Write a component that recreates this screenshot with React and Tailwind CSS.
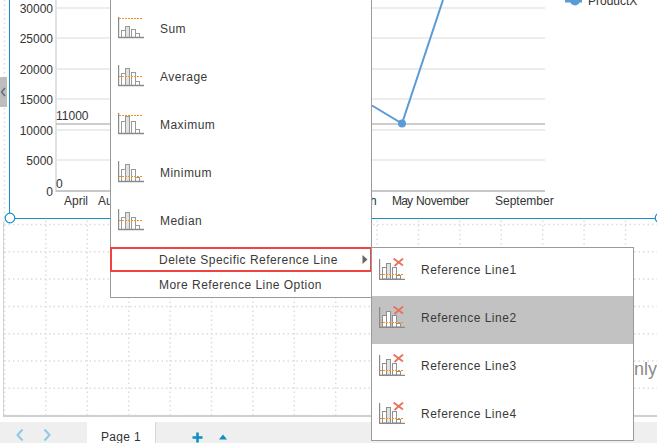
import React from "react";

const FONT = "[font-family:'Liberation_Sans',Arial,sans-serif]";

const bars = {
  sum: { tops: [13, 9, 12, 16], line: 1.5 },
  average: { tops: [8, 3, 7, 16], line: 11.5 },
  maximum: { tops: [8, 3, 8, 16], line: 2.5 },
  minimum: { tops: [8, 3, 8, 16], line: 15.5 },
  median: { tops: [8, 3, 8, 16], line: 11.5 },
};

const XS = [3.5, 7.5, 13.5, 17.5];
const BW = 4;

function BarIcon({ kind }) {
  const b = bars[kind];
  return (
    <svg width="26" height="22" viewBox="0 0 26 22" className="-mt-[2px] shrink-0">
      {b.tops.map((t, i) => (
        <rect key={i} x={XS[i]} y={t + 0.5} width={BW} height={20 - t} fill={i === 1 ? "#e2e2e2" : "#ffffff"} stroke="#999999" strokeWidth="1" />
      ))}
      <path d="M0.5 0V20.5H26" fill="none" stroke="#8a8a8a" strokeWidth="1.4" />
      <line x1="1" y1={b.line} x2="24" y2={b.line} stroke="#f5921e" strokeWidth="1" strokeDasharray="2 1" />
    </svg>
  );
}

function DeleteIcon({ selected }) {
  const tops = [9, 5, 9, 17];
  return (
    <svg width="26" height="22" viewBox="0 0 26 22" className="shrink-0">
      {tops.map((t, i) => (
        <rect key={i} x={XS[i]} y={t + 0.5} width={BW} height={20.5 - t} fill={i === 1 && !selected ? "#e2e2e2" : "#ffffff"} stroke="#8f8f8f" strokeWidth="1" />
      ))}
      <path d="M0.5 1V21.5H26" fill="none" stroke="#8a8a8a" strokeWidth="1.4" />
      <line x1="1" y1="16.5" x2="25" y2="16.5" stroke="#f5921e" strokeWidth="1" strokeDasharray="2 1" />
      <path d="M14.5 0.5L24 7.5M24 0.5L15.5 8" fill="none" stroke="#e8705c" strokeWidth="1.8" />
    </svg>
  );
}

function Canvas() {
  const vx = Array.from({ length: 16 }, (_, i) => 4.5 + i * 41.4);
  const hy = Array.from({ length: 8 }, (_, i) => 224.5 + i * 27.3);
  const grid = [8, 38, 69, 99, 130, 160];
  const ticks = [["30000", 8], ["25000", 38], ["20000", 69], ["15000", 99], ["10000", 130], ["5000", 160], ["0", 191]];
  const cats = [["April", 64], ["Au", 98], ["h", 370], ["May", 392], ["November", 416], ["September", 495]];
  return (
    <svg width="657" height="417" viewBox="0 0 657 417" className="block">
      {vx.map((x) => (
        <line key={x} x1={x} y1="0" x2={x} y2="416" stroke="#dcdcdc" strokeWidth="1.5" strokeDasharray="1.5 3" />
      ))}
      {hy.map((y) => (
        <line key={y} x1="4" y1={y} x2="657" y2={y} stroke="#dcdcdc" strokeWidth="1.5" strokeDasharray="1.5 3" />
      ))}
      <rect x="10" y="0" width="647" height="218" fill="#ffffff" />
      <line x1="3.5" y1="222" x2="3.5" y2="417" stroke="#d4d4d4" />
      <line x1="3" y1="416" x2="657" y2="416" stroke="#d0d0d0" strokeWidth="2" />
      {grid.map((y, i) => (
        <line key={y} x1="56" y1={y} x2="545" y2={y} stroke={i % 2 === 0 ? "#ececec" : "#dcdcdc"} strokeWidth={i % 2 === 0 ? 2 : 1.2} />
      ))}
      <line x1="56" y1="0" x2="56" y2="192" stroke="#e2e2e2" strokeWidth="2" />
      <line x1="56" y1="191" x2="545" y2="191" stroke="#c8c8c8" strokeWidth="2" />
      <line x1="56" y1="124" x2="545" y2="124" stroke="#bdbdbd" strokeWidth="1.5" />
      <polyline points="372,105.5 402,123.5 443,0" fill="none" stroke="#5b9bd5" strokeWidth="2" />
      <circle cx="402" cy="123.5" r="4" fill="#5b9bd5" />
      <line x1="565" y1="1" x2="582" y2="1" stroke="#5b9bd5" strokeWidth="3" />
      <circle cx="575" cy="0.5" r="5" fill="#5b9bd5" />
      <g fontFamily="'Liberation Sans', Arial, sans-serif" fontSize="12" fill="#333333">
        {ticks.map(([t, y]) => (
          <text key={t} x="53" y={y + 5} textAnchor="end">{t}</text>
        ))}
        {cats.map(([t, x]) => (
          <text key={t} x={x} y="205" textLength={t === "November" ? 53 : t === "May" ? 21 : undefined}>{t}</text>
        ))}
        <text x="56" y="120">11000</text>
        <text x="56" y="188">0</text>
        <text x="588" y="5">ProductX</text>
      </g>
      <text x="620" y="375" fontFamily="'Liberation Sans', Arial, sans-serif" fontSize="18" fill="#8a8a8a">Only</text>
      <line x1="9.5" y1="0" x2="9.5" y2="218" stroke="#1493c1" strokeWidth="1" />
      <line x1="10" y1="218.5" x2="657" y2="218.5" stroke="#1493c1" strokeWidth="1" />
      <circle cx="10" cy="218" r="4.8" fill="#ffffff" stroke="#1493c1" strokeWidth="1.2" />
      <circle cx="660" cy="218" r="4.8" fill="#ffffff" stroke="#1493c1" strokeWidth="1.2" />
    </svg>
  );
}

function TabBar() {
  return (
    <div className="flex h-[21px] bg-[#efefef] text-[#333]">
      <div className="flex w-[87px] items-center gap-[17px] pl-[15px] pt-[4px]">
        <svg width="10" height="14" viewBox="0 0 10 14"><path d="M7.5 1.5L2.5 7L7.5 12.5" fill="none" stroke="#8ccbe4" strokeWidth="2" /></svg>
        <svg width="10" height="14" viewBox="0 0 10 14"><path d="M2.5 1.5L7.5 7L2.5 12.5" fill="none" stroke="#8ccbe4" strokeWidth="2" /></svg>
      </div>
      <div className="flex w-[69px] items-center justify-center border-r border-[#d5d9de] bg-white pt-[8px] text-[12px] tracking-[0.35px]">Page 1</div>
      <div className="flex items-center gap-[16px] pl-[36px] pt-[9px]">
        <svg width="11" height="11" viewBox="0 0 11 11"><path d="M5.5 0.5V10.5M0.5 5.5H10.5" stroke="#0f8fc0" strokeWidth="2.6" /></svg>
        <svg width="8" height="6" viewBox="0 0 8 6"><path d="M4 0.5L8 5.5H0Z" fill="#0f8fc0" /></svg>
      </div>
    </div>
  );
}

const items = [
  ["Sum", "sum"],
  ["Average", "average"],
  ["Maximum", "maximum"],
  ["Minimum", "minimum"],
  ["Median", "median"],
];

function MainMenu() {
  return (
    <div className="absolute left-[110px] top-0 flex w-[262px] flex-col border-x border-b border-[#9a9a9a] bg-white pt-[5px] text-[12px] tracking-[0.47px] text-[#3a3a3a]">
      {items.map(([label, kind]) => (
        <div key={kind} className="flex h-[48px] items-center gap-[16px] pl-[7px]">
          <BarIcon kind={kind} />
          <span>{label}</span>
        </div>
      ))}
      <div className="-mx-px mt-[2px] flex h-[25px] items-center justify-between border-2 border-[#f04444] pl-[47px] pr-[2px]">
        <span>Delete Specific Reference Line</span>
        <svg width="6" height="9" viewBox="0 0 6 9"><path d="M0.5 0L5.5 4.5L0.5 9Z" fill="#666" /></svg>
      </div>
      <div className="flex h-[25px] items-center pl-[48px]">More Reference Line Option</div>
    </div>
  );
}

function SubMenu() {
  const rows = ["Reference Line1", "Reference Line2", "Reference Line3", "Reference Line4"];
  return (
    <div className="absolute left-[371px] top-[247px] flex w-[263px] flex-col border border-[#9a9a9a] bg-white text-[12px] tracking-[0.5px] text-[#3a3a3a]">
      {rows.map((r, i) => (
        <div key={r} className={i === 1 ? "flex h-[48px] items-center gap-[16px] bg-[#c2c2c2] pb-[6px] pl-[7px]" : "flex h-[48px] items-center gap-[16px] pb-[6px] pl-[7px]"}>
          <DeleteIcon selected={i === 1} />
          <span className="mt-[2px]">{r}</span>
        </div>
      ))}
    </div>
  );
}

export default function App() {
  return (
    <div className={`relative flex h-[443px] w-[657px] flex-col overflow-hidden bg-white ${FONT}`}>
      <div className="h-[422px] shrink-0">
        <Canvas />
      </div>
      <TabBar />
      <div className="absolute left-0 top-[77px] flex h-[30px] w-[7px] items-center justify-center bg-[#bdbdbd]">
        <svg width="6" height="10" viewBox="0 0 6 10"><path d="M4 1L0.5 5L4 9" fill="none" stroke="#5a6b7a" strokeWidth="1.5" /></svg>
      </div>
      <MainMenu />
      <SubMenu />
    </div>
  );
}
